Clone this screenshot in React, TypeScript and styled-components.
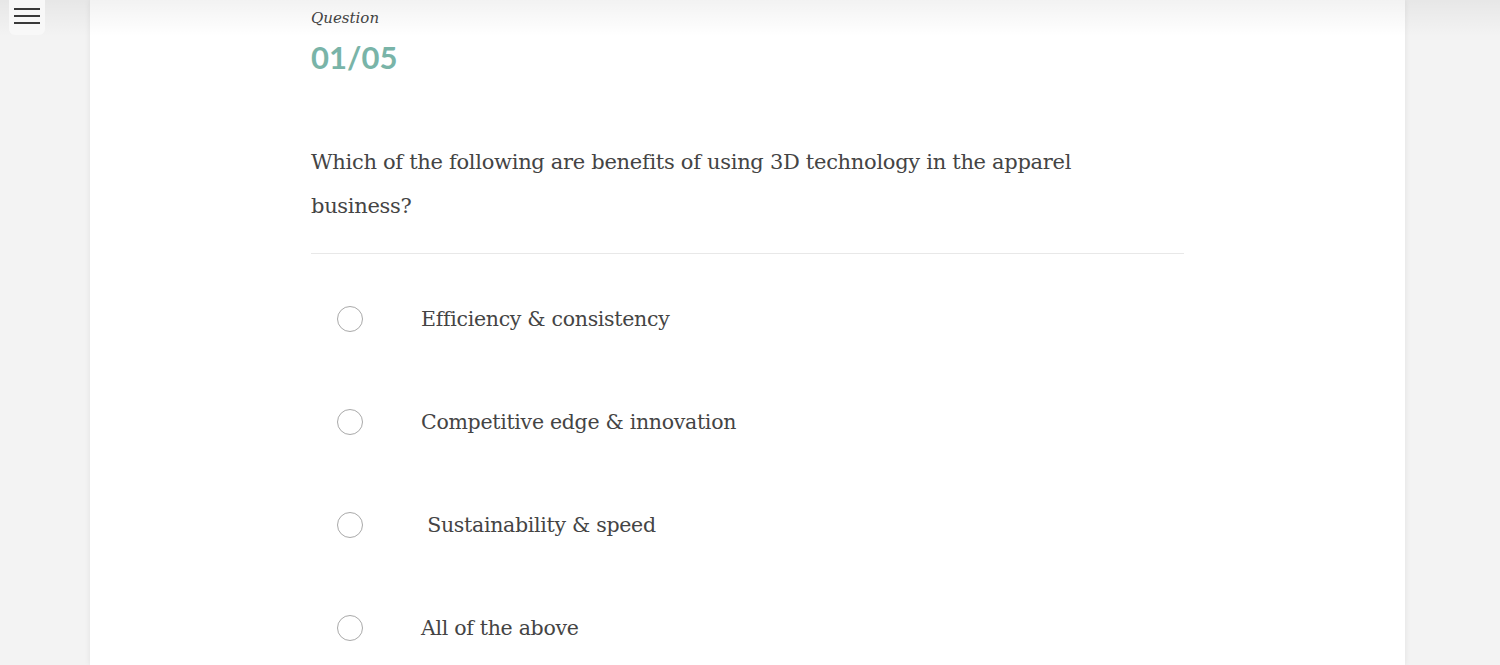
import React, { useState } from "react";
import styled, { createGlobalStyle } from "styled-components";

const GlobalStyle = createGlobalStyle`
  html, body {
    margin: 0;
    padding: 0;
    height: 100%;
    background-color: #f3f3f3;
    overflow: hidden;
  }
  #root {
    height: 100%;
  }
`;

const Page = styled.div`
  position: relative;
  height: 665px;
  display: flex;
  justify-content: center;
  background-color: #f3f3f3;
`;

const TopShade = styled.div`
  position: absolute;
  top: 0;
  left: 0;
  right: 0;
  height: 36px;
  background: linear-gradient(to bottom, rgba(0, 0, 0, 0.05), rgba(0, 0, 0, 0));
  pointer-events: none;
  z-index: 2;
`;

const MenuButton = styled.button`
  position: absolute;
  top: 0;
  left: 9px;
  width: 36px;
  height: 35px;
  border: none;
  border-radius: 0 0 6px 6px;
  background-color: #f8f8f8;
  display: flex;
  flex-direction: column;
  justify-content: center;
  align-items: center;
  gap: 5px;
  padding: 0 0 4px;
  cursor: pointer;
  z-index: 3;

  & span {
    display: block;
    width: 26px;
    height: 2px;
    background-color: #3a3a3a;
  }
`;

const Card = styled.main`
  width: 1315px;
  margin-left: 90px;
  margin-right: 95px;
  background-color: #ffffff;
  box-shadow: 0 0 6px rgba(0, 0, 0, 0.08);
  display: flex;
  justify-content: center;
`;

const Content = styled.div`
  width: 873px;
  display: flex;
  flex-direction: column;
`;

const Label = styled.p`
  margin: 9px 0 0;
  font-family: "DejaVu Serif", "Liberation Serif", serif;
  font-style: italic;
  font-size: 15px;
  color: #444444;
`;

const Counter = styled.h2`
  margin: 10px 0 0;
  font-family: Lato, "Open Sans", sans-serif;
  font-weight: 700;
  font-size: 31px;
  color: #79b4a8;
  line-height: 40px;
`;

const QuestionText = styled.p`
  margin: 63px 0 0;
  padding: 0 80px 25px 0;
  font-family: "DejaVu Serif", "Liberation Serif", serif;
  font-size: 21px;
  line-height: 44px;
  color: #444444;
  letter-spacing: -0.3px;
  border-bottom: 1px solid #e8e8e8;
`;

const Options = styled.ul`
  list-style: none;
  margin: 0;
  padding: 0;
  display: flex;
  flex-direction: column;
`;

const Option = styled.li`
  height: 103px;
  display: flex;
  align-items: center;
  cursor: pointer;

  &:first-child {
    margin-top: 13px;
  }
`;

const Radio = styled.span<{ $checked: boolean }>`
  width: 26px;
  height: 26px;
  margin-left: 26px;
  border-radius: 50%;
  border: 1px solid #a9a9a9;
  box-sizing: border-box;
  flex-shrink: 0;
  display: flex;
  align-items: center;
  justify-content: center;

  &::after {
    content: "";
    width: 12px;
    height: 12px;
    border-radius: 50%;
    background-color: ${(p) => (p.$checked ? "#79b4a8" : "transparent")};
  }
`;

const OptionText = styled.span`
  margin-left: 58px;
  font-family: "DejaVu Serif", "Liberation Serif", serif;
  font-size: 20.5px;
  color: #444444;
  letter-spacing: -0.3px;
  white-space: pre;
`;

const answers = [
  "Efficiency & consistency",
  "Competitive edge & innovation",
  " Sustainability & speed",
  "All of the above",
];

const App: React.FC = () => {
  const [selected, setSelected] = useState<number | null>(null);

  return (
    <>
      <GlobalStyle />
      <Page>
        <TopShade />
        <MenuButton aria-label="menu">
          <span />
          <span />
          <span />
        </MenuButton>
        <Card>
          <Content>
            <Label>Question</Label>
            <Counter>01/05</Counter>
            <QuestionText>
              Which of the following are benefits of using 3D technology in the apparel business?
            </QuestionText>
            <Options>
              {answers.map((answer, i) => (
                <Option key={i} onClick={() => setSelected(i)}>
                  <Radio $checked={selected === i} />
                  <OptionText>{answer}</OptionText>
                </Option>
              ))}
            </Options>
          </Content>
        </Card>
      </Page>
    </>
  );
};

export default App;
